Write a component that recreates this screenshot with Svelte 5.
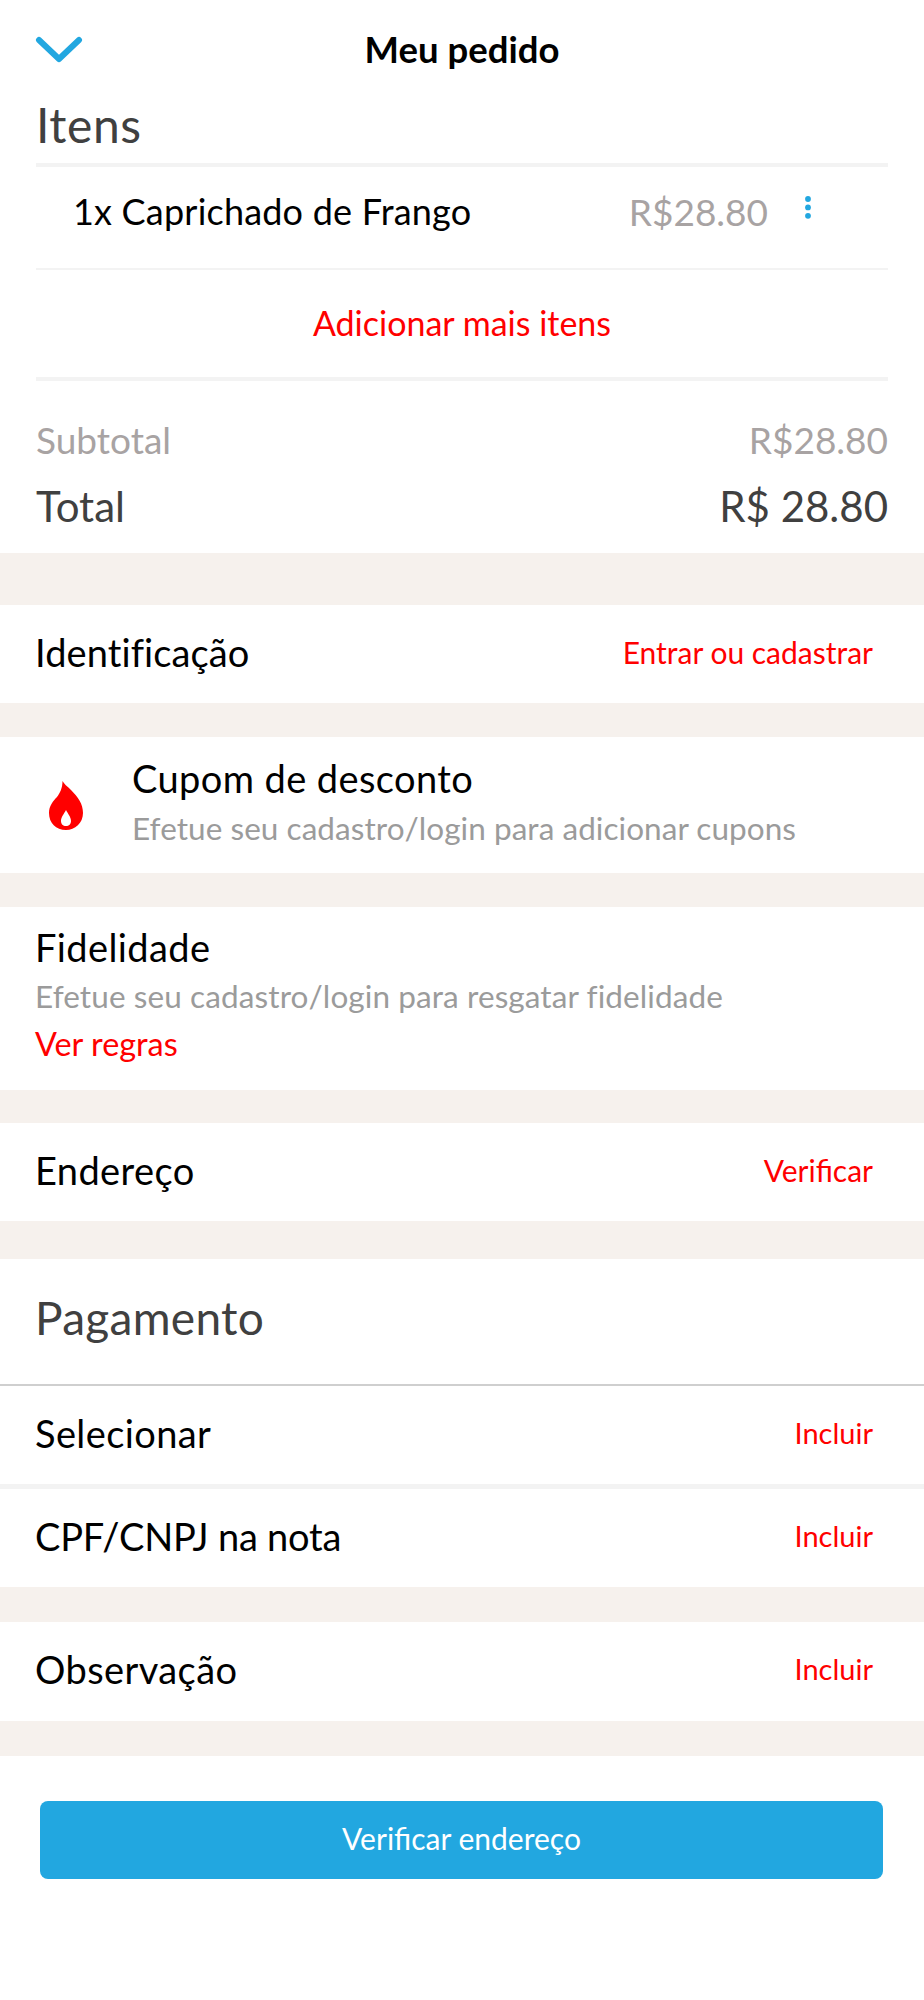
<script lang="ts">
  const rows = {
    ident: { label: "Identificação", action: "Entrar ou cadastrar" },
    address: { label: "Endereço", action: "Verificar" },
    obs: { label: "Observação", action: "Incluir" },
  };
</script>

<div class="page">
  <section class="card order">
    <header class="topbar">
      <svg class="chevron" width="48" height="30" viewBox="0 0 48 30">
        <path d="M4 5 L24 24 L44 5" fill="none" stroke="#22a7e0" stroke-width="6" stroke-linecap="round" stroke-linejoin="round" />
      </svg>
      <h1>Meu pedido</h1>
    </header>
    <h2 class="section-title items-title">Itens</h2>
    <div class="item">
      <span class="item-name">1x Caprichado de Frango</span>
      <span class="item-price">R$28.80</span>
      <svg class="dots" width="8" height="26" viewBox="0 0 8 26">
        <circle cx="4" cy="4" r="2.9" fill="#22a7e0" />
        <circle cx="4" cy="12.4" r="2.9" fill="#22a7e0" />
        <circle cx="4" cy="20.8" r="2.9" fill="#22a7e0" />
      </svg>
    </div>
    <div class="add-more">Adicionar mais itens</div>
    <div class="totals">
      <div class="subtotal"><span>Subtotal</span><span>R$28.80</span></div>
      <div class="total"><span>Total</span><span>R$ 28.80</span></div>
    </div>
  </section>

  <section class="card row row-ident">
    <span class="label ident-label">{rows.ident.label}</span>
    <span class="action">{rows.ident.action}</span>
  </section>

  <section class="card coupon">
    <svg class="flame" width="34" height="49" viewBox="0 0 34 49">
      <path fill="#ff0000" fill-rule="evenodd" d="M13.5 0 C15 3 18 5 22 9 C29 16 34 23 34 32 C34 42 26 49 17 49 C7 49 0 42 0 32 C0 25 4 20 8 16 C11 12 13.5 7 13.5 0 Z M17 29 C15 33 12 36 12 40 C12 43 14 45 17 45 C20 45 22 43 22 40 C22 36 19 33 17 29 Z" />
    </svg>
    <div class="coupon-text">
      <div class="label">Cupom de desconto</div>
      <div class="hint">Efetue seu cadastro/login para adicionar cupons</div>
    </div>
  </section>

  <section class="card loyalty">
    <div class="label">Fidelidade</div>
    <div class="hint">Efetue seu cadastro/login para resgatar fidelidade</div>
    <div class="action">Ver regras</div>
  </section>

  <section class="card row row-address">
    <span class="label">{rows.address.label}</span>
    <span class="action">{rows.address.action}</span>
  </section>

  <section class="card payment">
    <h2 class="section-title pay-title">Pagamento</h2>
    <div class="row pay-select">
      <span class="label">Selecionar</span>
      <span class="action small">Incluir</span>
    </div>
    <div class="row pay-doc">
      <span class="label doc-label">CPF/CNPJ na nota</span>
      <span class="action small">Incluir</span>
    </div>
  </section>

  <section class="card row row-obs">
    <span class="label">{rows.obs.label}</span>
    <span class="action small">{rows.obs.action}</span>
  </section>

  <footer class="card footer">
    <button class="cta">Verificar endereço</button>
  </footer>
</div>

<style>
  :global(body) {
    margin: 0;
    background: #fff;
  }

  .page {
    display: flex;
    flex-direction: column;
    background: #f6f1ed;
    font-family: "Lato", "Noto Sans", sans-serif;
    color: #000;
  }

  .card {
    background: #fff;
  }

  .order {
    height: 553px;
    padding: 0 36px;
    box-sizing: border-box;
  }

  .topbar {
    height: 100px;
    box-sizing: border-box;
    padding-bottom: 3px;
    display: flex;
    align-items: center;
    justify-content: center;
    position: relative;
  }

  .chevron {
    position: absolute;
    left: -1px;
    top: 35px;
  }

  h1 {
    margin: 0;
    font-size: 36.5px;
    font-weight: 700;
  }

  .section-title {
    margin: 0;
    font-weight: 400;
    color: #404040;
    font-size: 46px;
    letter-spacing: 0.3px;
  }

  .items-title {
    height: 63px;
    line-height: 49px;
    font-size: 48px;
    letter-spacing: 0.6px;
    border-bottom: 4px solid #f3f3f3;
  }

  .item {
    height: 88px;
    padding: 0 0 13px 37px;
    display: flex;
    align-items: center;
    font-size: 36px;
    letter-spacing: 0.2px;
    border-bottom: 2px solid #f3f3f3;
  }

  .item-name {
    flex: 1;
  }

  .item-price {
    color: #a8a3a3;
    font-size: 37px;
    letter-spacing: 0;
  }

  .dots {
    margin: -7px 76px 0 36px;
  }

  .add-more {
    height: 107px;
    line-height: 106px;
    text-align: center;
    color: #ff0000;
    font-size: 34px;
    border-bottom: 4px solid #f3f3f3;
  }

  .totals {
    padding-top: 34px;
  }

  .subtotal,
  .total {
    display: flex;
    justify-content: space-between;
  }

  .subtotal {
    color: #a8a3a3;
    font-size: 37px;
    line-height: 50px;
    margin-bottom: 16px;
  }

  .total {
    color: #404040;
    font-size: 42px;
    line-height: 50px;
  }

  .row {
    display: flex;
    align-items: center;
    justify-content: space-between;
    padding: 0 51px 5px 35px;
    box-sizing: border-box;
  }

  .label {
    font-size: 38px;
    letter-spacing: 0.4px;
    line-height: 48px;
  }

  .ident-label {
    letter-spacing: 0.1px;
  }

  .doc-label {
    letter-spacing: -0.2px;
  }

  .action {
    color: #ff0000;
    font-size: 30px;
    line-height: 42px;
  }

  .action.small {
    font-size: 29px;
  }

  .hint {
    color: #9b9b9b;
    font-size: 31.5px;
    line-height: 40px;
  }

  .row-ident {
    margin-top: 52px;
    height: 98px;
  }

  .coupon {
    margin-top: 34px;
    height: 136px;
    display: flex;
    align-items: center;
    padding-left: 49px;
  }

  .flame {
    flex: none;
  }

  .coupon-text {
    margin-left: 49px;
    padding-bottom: 8px;
  }

  .coupon-text .hint {
    margin-top: 6px;
    letter-spacing: 0.05px;
  }

  .loyalty {
    margin-top: 34px;
    height: 183px;
    padding: 16px 35px 0;
    box-sizing: border-box;
  }

  .loyalty .hint {
    line-height: 44px;
    margin-top: 3px;
    letter-spacing: 0.1px;
  }

  .loyalty .action {
    margin-top: 5px;
    font-size: 32.4px;
  }

  .row-address {
    margin-top: 33px;
    height: 98px;
  }

  .payment {
    margin-top: 38px;
  }

  .pay-title {
    height: 125px;
    line-height: 117px;
    padding: 0 35px;
    border-bottom: 2px solid #cfcfcf;
  }

  .pay-select {
    height: 103px;
    border-bottom: 5px solid #f3f3f3;
  }

  .pay-doc {
    height: 98px;
  }

  .row-obs {
    margin-top: 35px;
    height: 99px;
  }

  .footer {
    margin-top: 35px;
    height: 244px;
    padding: 45px 41px 0 40px;
    box-sizing: border-box;
  }

  .cta {
    display: block;
    width: 100%;
    height: 78px;
    padding: 0 0 4px;
    border: 0;
    border-radius: 8px;
    background: #22a7e0;
    color: #fff;
    font-family: inherit;
    font-size: 30px;
  }
</style>
